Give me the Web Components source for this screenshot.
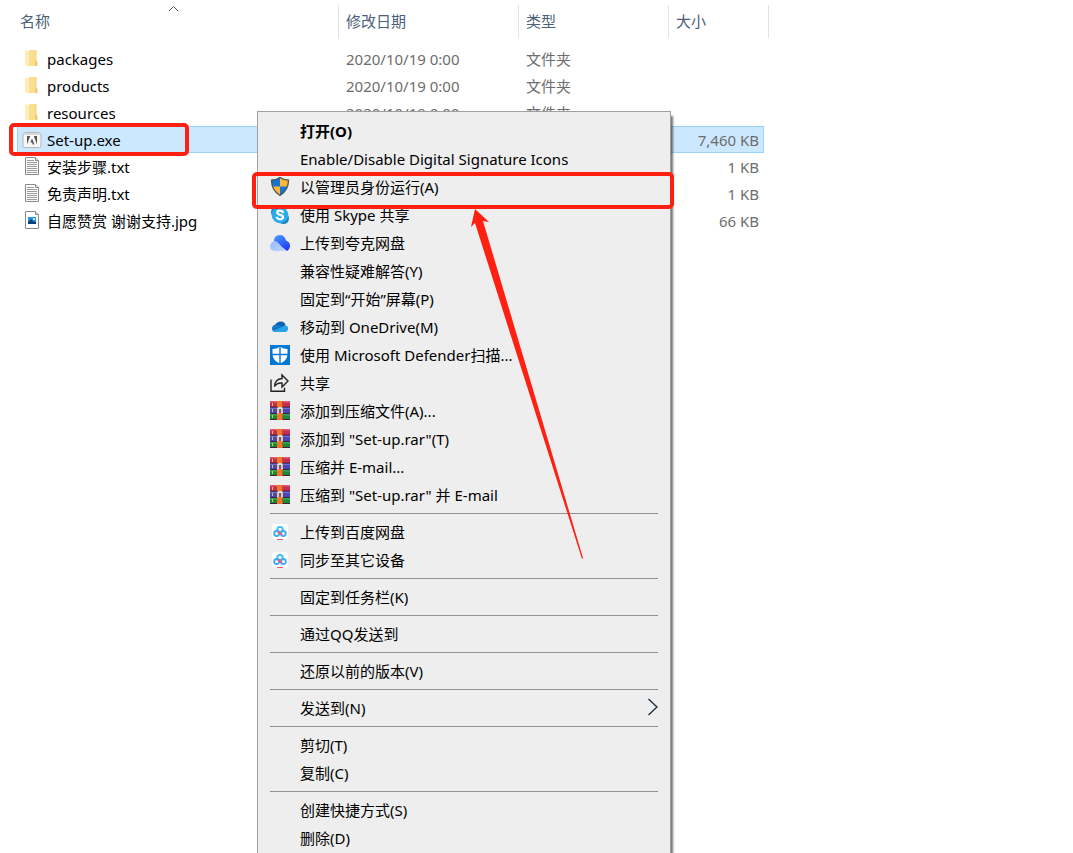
<!DOCTYPE html>
<html lang="zh-CN">
<head>
<meta charset="utf-8">
<title>Set-up</title>
<style>
    body {
        margin: 0;
        height: 100vh;
        overflow: hidden;
        position: relative;
        background: #ffffff;
        color: #000000;
        font: 15px/20px "Noto Sans", "Noto Sans CJK SC", sans-serif;
    }
</style>
</head>
<body>
<file-list></file-list>

<context-menu>
    <menu-entry primary>打开(O)</menu-entry>
    <menu-entry>Enable/Disable Digital Signature Icons</menu-entry>
    <menu-entry icon="shield">以管理员身份运行(A)</menu-entry>
    <menu-entry icon="skype">使用 Skype 共享</menu-entry>
    <menu-entry icon="quark">上传到夸克网盘</menu-entry>
    <menu-entry>兼容性疑难解答(Y)</menu-entry>
    <menu-entry>固定到“开始”屏幕(P)</menu-entry>
    <menu-entry icon="onedrive">移动到 OneDrive(M)</menu-entry>
    <menu-entry icon="defender">使用 Microsoft Defender扫描...</menu-entry>
    <menu-entry icon="share">共享</menu-entry>
    <menu-entry icon="rar">添加到压缩文件(A)...</menu-entry>
    <menu-entry icon="rar">添加到 "Set-up.rar"(T)</menu-entry>
    <menu-entry icon="rar">压缩并 E-mail...</menu-entry>
    <menu-entry icon="rar">压缩到 "Set-up.rar" 并 E-mail</menu-entry>
    <menu-line></menu-line>
    <menu-entry icon="baidu">上传到百度网盘</menu-entry>
    <menu-entry icon="baidu">同步至其它设备</menu-entry>
    <menu-line></menu-line>
    <menu-entry>固定到任务栏(K)</menu-entry>
    <menu-line></menu-line>
    <menu-entry>通过QQ发送到</menu-entry>
    <menu-line></menu-line>
    <menu-entry>还原以前的版本(V)</menu-entry>
    <menu-line></menu-line>
    <menu-entry submenu>发送到(N)</menu-entry>
    <menu-line></menu-line>
    <menu-entry>剪切(T)</menu-entry>
    <menu-entry>复制(C)</menu-entry>
    <menu-line></menu-line>
    <menu-entry>创建快捷方式(S)</menu-entry>
    <menu-entry>删除(D)</menu-entry>
</context-menu>

<red-frame style="left: 9px; top: 123px; width: 180px; height: 33px"></red-frame>
<red-frame style="left: 252px; top: 172px; width: 422px; height: 37px"></red-frame>
<red-arrow></red-arrow>

<script>
const ICONS = {
    folder: `<path fill="#f7d57c" d="M7 1h7.500v11l1 1v4H8z"/><path fill="#fbdf91" d="M7 1h6v16H7z"/><path fill="#ffedb8" d="M3 1l4 1.500V18l-4-2z"/><path fill="#efc463" d="M13.500 12h1.500v5h-1.500z"/>`,
    exe: `<path fill="#f7f7f7" stroke="#b5b5b5" d="M3 2.500h14l2 2.500v11q0 1.500-1.500 1.500h-15q-1.500 0-1.500-1.500V5z"/><path fill="#dadada" d="M3 3h14l1 2H2z"/><path fill="#555" d="M5 6h3.200L5 14.500zM15 6h-3.200l3.200 8.500zM10 8.500l2.500 6h-1.700l-.8-2H8.300z"/>`,
    text: `<path fill="#fdfdfd" stroke="#8b8b8b" d="M3.500.5h10l3 3v14h-13z"/><path fill="#e4e4e4" stroke="#8b8b8b" d="M13.500.5v3h3"/><path stroke="#9a9a9a" d="M5 3.500h7M5 5.500h10M5 7.500h10M5 9.500h10M5 11.500h10M5 13.500h10M5 15.500h10"/>`,
    image: `<path fill="#fdfdfd" stroke="#8b8b8b" d="M3.500.5h10l3 3v14h-13z"/><path fill="#e4e4e4" stroke="#8b8b8b" d="M13.500.5v3h3"/><path fill="#2493e8" d="M6 6h8v7H6z"/><path fill="#0b3f78" d="M6 11l3-3 2.500 3 1-1 1.500 1.500V13H6z"/><circle cx="12" cy="8" r="1" fill="#fff"/>`,
    shield: `<path fill="#1673cf" d="M10 0Q6 3 1.500 3q0 10 8.500 15.500 8.500-5.500 8.500-15.500Q14 3 10 0z"/><path fill="#fdb933" d="M10 0v9.500h7.500q1-3 1-6.500Q14 3 10 0zM10 9.500v9Q4 15 2.300 9.500z"/><path fill="none" stroke="#4a545c" stroke-width="1.300" d="M10 .5Q6 3.200 1.500 3.200q0 10 8.500 15.300 8.500-5.300 8.500-15.300Q14 3.200 10 .5z"/>`,
    skype: `<circle cx="7" cy="7" r="6" fill="#1b87cf"/><circle cx="13.500" cy="13.500" r="5.500" fill="#1681c8"/><circle cx="10" cy="10" r="8.300" fill="#2baaec"/><path fill="none" stroke="#fff" stroke-width="2.200" stroke-linecap="round" d="M13 7.200C11.500 5 7.200 5.200 7.200 7.600c0 3 5.900 1.500 5.900 4.500 0 2.700-4.700 2.900-6.300.6"/>`,
    quark: `<defs><linearGradient id="q" x2=".6" y2="1"><stop stop-color="#4a9dff"/><stop offset="1" stop-color="#223cf5"/></linearGradient><linearGradient id="p" x2="1" y2="1"><stop stop-color="#8fb8ff"/><stop offset="1" stop-color="#c6d7ff"/></linearGradient></defs><path fill="url(#q)" d="M4 8q0-6 6-6 4.500 0 6 5.500 4 1.500 4 5 0 3.500-3 5.500z"/><path fill="url(#p)" d="M0 13.500q0-4 4.500-5.500 3 0 6 4.500 2.500 4 6.500 5.500H5q-5-.3-5-4.500z"/>`,
    onedrive: `<path fill="#0f5fb3" d="M5 8q2-3.500 6-3.500 3.500 0 4.500 3.500l-3 3-7-2z"/><path fill="#1279cb" d="M6 7.500q-4 .5-4 4T6 15h6l2-5z"/><path fill="#29a3e6" d="M3 14l9-4q2-2 4.500-1.500Q18.500 9.500 18 12.500 17.500 15 15 15H6q-2 0-3-1z"/>`,
    defender: `<path fill="#0078d7" d="M0 0h20v20H0z"/><path fill="#fff" d="M10 1.500Q7 4 2.500 4v5q0 6.500 7.500 9.500 7.500-3 7.500-9.500V4Q13 4 10 1.500z"/><path stroke="#0078d7" stroke-width="1.400" d="M10 1v18M2 9.500h16"/>`,
    share: `<path fill="none" stroke="#222" stroke-width="1.400" d="M1 6.500v11.800h13.500v-3.500M4.500 13.500q.5-7.500 7.500-8V2l6 6-6 6v-4q-5-.5-7.500 3.500z"/>`,
    rar: `<path fill="#c72d50" d="M0 0h20v6H0z"/><path fill="#e05c74" d="M0 0h20v1.500H0z"/><path fill="#4747b5" d="M0 6h20v6.500H0z"/><path fill="#7270d3" d="M0 6.500h20V8H0z"/><path fill="#168a3b" d="M0 12.500h20V19H0z"/><path fill="#34aa54" d="M0 13h20v1.500H0z"/><path stroke="#40203d" d="M0 6h20M0 12.500h20M0 18.500h20"/><path stroke="#e8c342" d="M2.500 2v3M2.500 8v3M2.500 14v3"/><path fill="#f2762a" d="M7 0h6v19H7z"/><path fill="#c44c18" d="M12 0h1v19h-1z"/><path fill="#8a5a48" d="M7 6h6v6H7z"/><path fill="none" stroke="#fff" stroke-width="1.300" d="M8 12.500V8q0-1 1-1h2q1 0 1 1v4.500"/>`,
    baidu: `<rect x="2" y="2" width="16" height="16" rx="3" fill="#fff"/><g fill="none" stroke-width="1.900"><circle cx="10" cy="7.600" r="2.700" stroke="#38bdf3"/><circle cx="6.700" cy="11.500" r="2.500" stroke="#3caef5"/><circle cx="13.300" cy="11.500" r="2.500" stroke="#3caef5"/><path stroke="#f65773" d="M8 9.500l4 3.500"/><path stroke="#f65773" stroke-width="1" d="M7 17.500h6"/></g>`
};

class AppIcon extends HTMLElement {
    constructor() {
        super();
        this.attachShadow({mode: "open"});
    }

    connectedCallback() {
        const shapes = ICONS[this.getAttribute("name")] || "";
        this.shadowRoot.innerHTML = `
        <style>
            :host {
                display: block;
                flex: none;
                width: 20px;
                height: 20px;
            }

            svg {
                display: block;
            }
        </style>
        <svg width="20" height="20" viewBox="0 0 20 20" aria-hidden="true">${shapes}</svg>`;
    }
}

customElements.define("app-icon", AppIcon);

class FileList extends HTMLElement {
    constructor() {
        super();
        this.attachShadow({mode: "open"});
        this.files = [
            {icon: "folder", name: "packages", date: "2020/10/19 0:00", type: "文件夹"},
            {icon: "folder", name: "products", date: "2020/10/19 0:00", type: "文件夹"},
            {icon: "folder", name: "resources", date: "2020/10/19 0:00", type: "文件夹"},
            {icon: "exe", name: "Set-up.exe", size: "7,460 KB", selected: true},
            {icon: "text", name: "安装步骤.txt", size: "1 KB"},
            {icon: "text", name: "免责声明.txt", size: "1 KB"},
            {icon: "image", name: "自愿赞赏 谢谢支持.jpg", size: "66 KB"}
        ];
    }

    connectedCallback() {
        this.render();
    }

    row(file) {
        return `
        <tr class="${file.selected ? "selected" : ""}">
            <td><div class="name"><app-icon name="${file.icon}"></app-icon>${file.name}</div></td>
            <td>${file.date || ""}</td>
            <td>${file.type || ""}</td>
            <td class="size">${file.size || ""}</td>
        </tr>`;
    }

    render() {
        this.shadowRoot.innerHTML = `
        <style>
            :host {
                display: block;
                padding: 5px 0 0 17px;
            }

            table {
                table-layout: fixed;
                width: 752px;
                border-spacing: 0;
            }

            .col-name { width: 322px; }
            .col-date { width: 180px; }
            .col-type { width: 150px; }
            .col-size { width: 95px; }
            .col-edge { width: 5px; }

            th {
                position: relative;
                height: 33px;
                padding: 0 7px 2px;
                border-right: 1px solid #e2e2e2;
                box-sizing: border-box;
                color: #4c607a;
                font-weight: normal;
                text-align: left;
            }

            th:first-child {
                padding-left: 3px;
            }

            .sort {
                position: absolute;
                left: 0;
                right: 8px;
                top: 0;
                margin: 0 auto;
            }

            .gap td {
                height: 7px;
            }

            td {
                height: 27px;
                padding: 0 7px;
                box-sizing: border-box;
                color: #6d6d6d;
                white-space: nowrap;
            }

            .gap td, td:first-child {
                padding: 0;
            }

            .name {
                display: flex;
                align-items: center;
                gap: 5px;
                padding-left: 5px;
                color: #000000;
            }

            .size {
                padding-right: 5px;
                text-align: right;
            }

            .selected td {
                background: #cce8ff;
                border: solid #99d1ff;
                border-width: 1px 0;
            }

            .selected td:first-child {
                border-left-width: 1px;
            }

            .selected .name {
                padding-left: 4px;
            }

            .selected td:last-child {
                padding-right: 4px;
                border-right-width: 1px;
            }
        </style>
        <table>
            <colgroup>
                <col class="col-name"><col class="col-date"><col class="col-type"><col class="col-size"><col class="col-edge">
            </colgroup>
            <thead>
                <tr>
                    <th>名称
                        <svg class="sort" width="11" height="7" viewBox="0 0 11 7" aria-hidden="true"><path fill="none" stroke="#555" d="M1 6l4.500-4.500L10 6"/></svg>
                    </th>
                    <th>修改日期</th>
                    <th>类型</th>
                    <th colspan="2">大小</th>
                </tr>
            </thead>
            <tbody>
                <tr class="gap"><td colspan="5"></td></tr>
                ${this.files.map(file => this.row(file)).join("")}
            </tbody>
        </table>`;
    }
}

customElements.define("file-list", FileList);

class ContextMenu extends HTMLElement {
    constructor() {
        super();
        this.attachShadow({mode: "open"}).innerHTML = `
        <style>
            :host {
                position: absolute;
                left: 257px;
                top: 111px;
                width: 414px;
                box-sizing: border-box;
                padding: 5px 0;
                border: 1px solid #a0a0a0;
                background: #eeeeee;
                box-shadow: 3px 4px 2px -1px rgba(0, 0, 0, 0.55);
            }
        </style>
        <div role="menu"><slot></slot></div>`;
    }
}

customElements.define("context-menu", ContextMenu);

class MenuEntry extends HTMLElement {
    constructor() {
        super();
        this.attachShadow({mode: "open"});
    }

    connectedCallback() {
        const arrow = `<svg width="11" height="20" viewBox="0 0 11 20" aria-hidden="true"><path fill="none" stroke="#1b2b3c" stroke-width="1.300" d="M1.500 1l8.500 8-8.500 8"/></svg>`;
        this.shadowRoot.innerHTML = `
        <style>
            :host {
                display: block;
            }

            button {
                display: flex;
                align-items: center;
                gap: 10px;
                width: 100%;
                height: 28px;
                padding: 0 12px;
                border: 0;
                background: none;
                color: inherit;
                font: inherit;
                text-align: left;
                white-space: nowrap;
            }

            button:hover {
                background: #ffffff;
            }

            :host([primary]) button {
                font-weight: bold;
            }

            span {
                flex: 1;
            }
        </style>
        <button type="button" role="menuitem">
            <app-icon name="${this.getAttribute("icon") || ""}"></app-icon>
            <span><slot></slot></span>
            ${this.hasAttribute("submenu") ? arrow : ""}
        </button>`;
    }
}

customElements.define("menu-entry", MenuEntry);

class MenuLine extends HTMLElement {
    constructor() {
        super();
        this.attachShadow({mode: "open"}).innerHTML = `
        <style>
            :host {
                display: block;
                height: 1px;
                margin: 4px 12px;
                background: #919191;
            }
        </style>`;
    }
}

customElements.define("menu-line", MenuLine);

// annotations drawn over the window
class RedFrame extends HTMLElement {
    constructor() {
        super();
        this.attachShadow({mode: "open"}).innerHTML = `
        <style>
            :host {
                position: absolute;
                box-sizing: border-box;
                border: 4px solid #ff2012;
                border-radius: 5px;
                pointer-events: none;
            }
        </style>`;
    }
}

customElements.define("red-frame", RedFrame);

class RedArrow extends HTMLElement {
    constructor() {
        super();
        this.attachShadow({mode: "open"}).innerHTML = `
        <style>
            :host {
                position: absolute;
                left: 470px;
                top: 208px;
                pointer-events: none;
            }

            svg {
                display: block;
            }
        </style>
        <svg width="114" height="352" viewBox="0 0 114 352" aria-hidden="true">
            <path fill="#ff2012" d="M5 1L19 14l-6-1 100 337-1 1L5 15l-4 4z"/>
        </svg>`;
    }
}

customElements.define("red-arrow", RedArrow);
</script>
</body>
</html>
